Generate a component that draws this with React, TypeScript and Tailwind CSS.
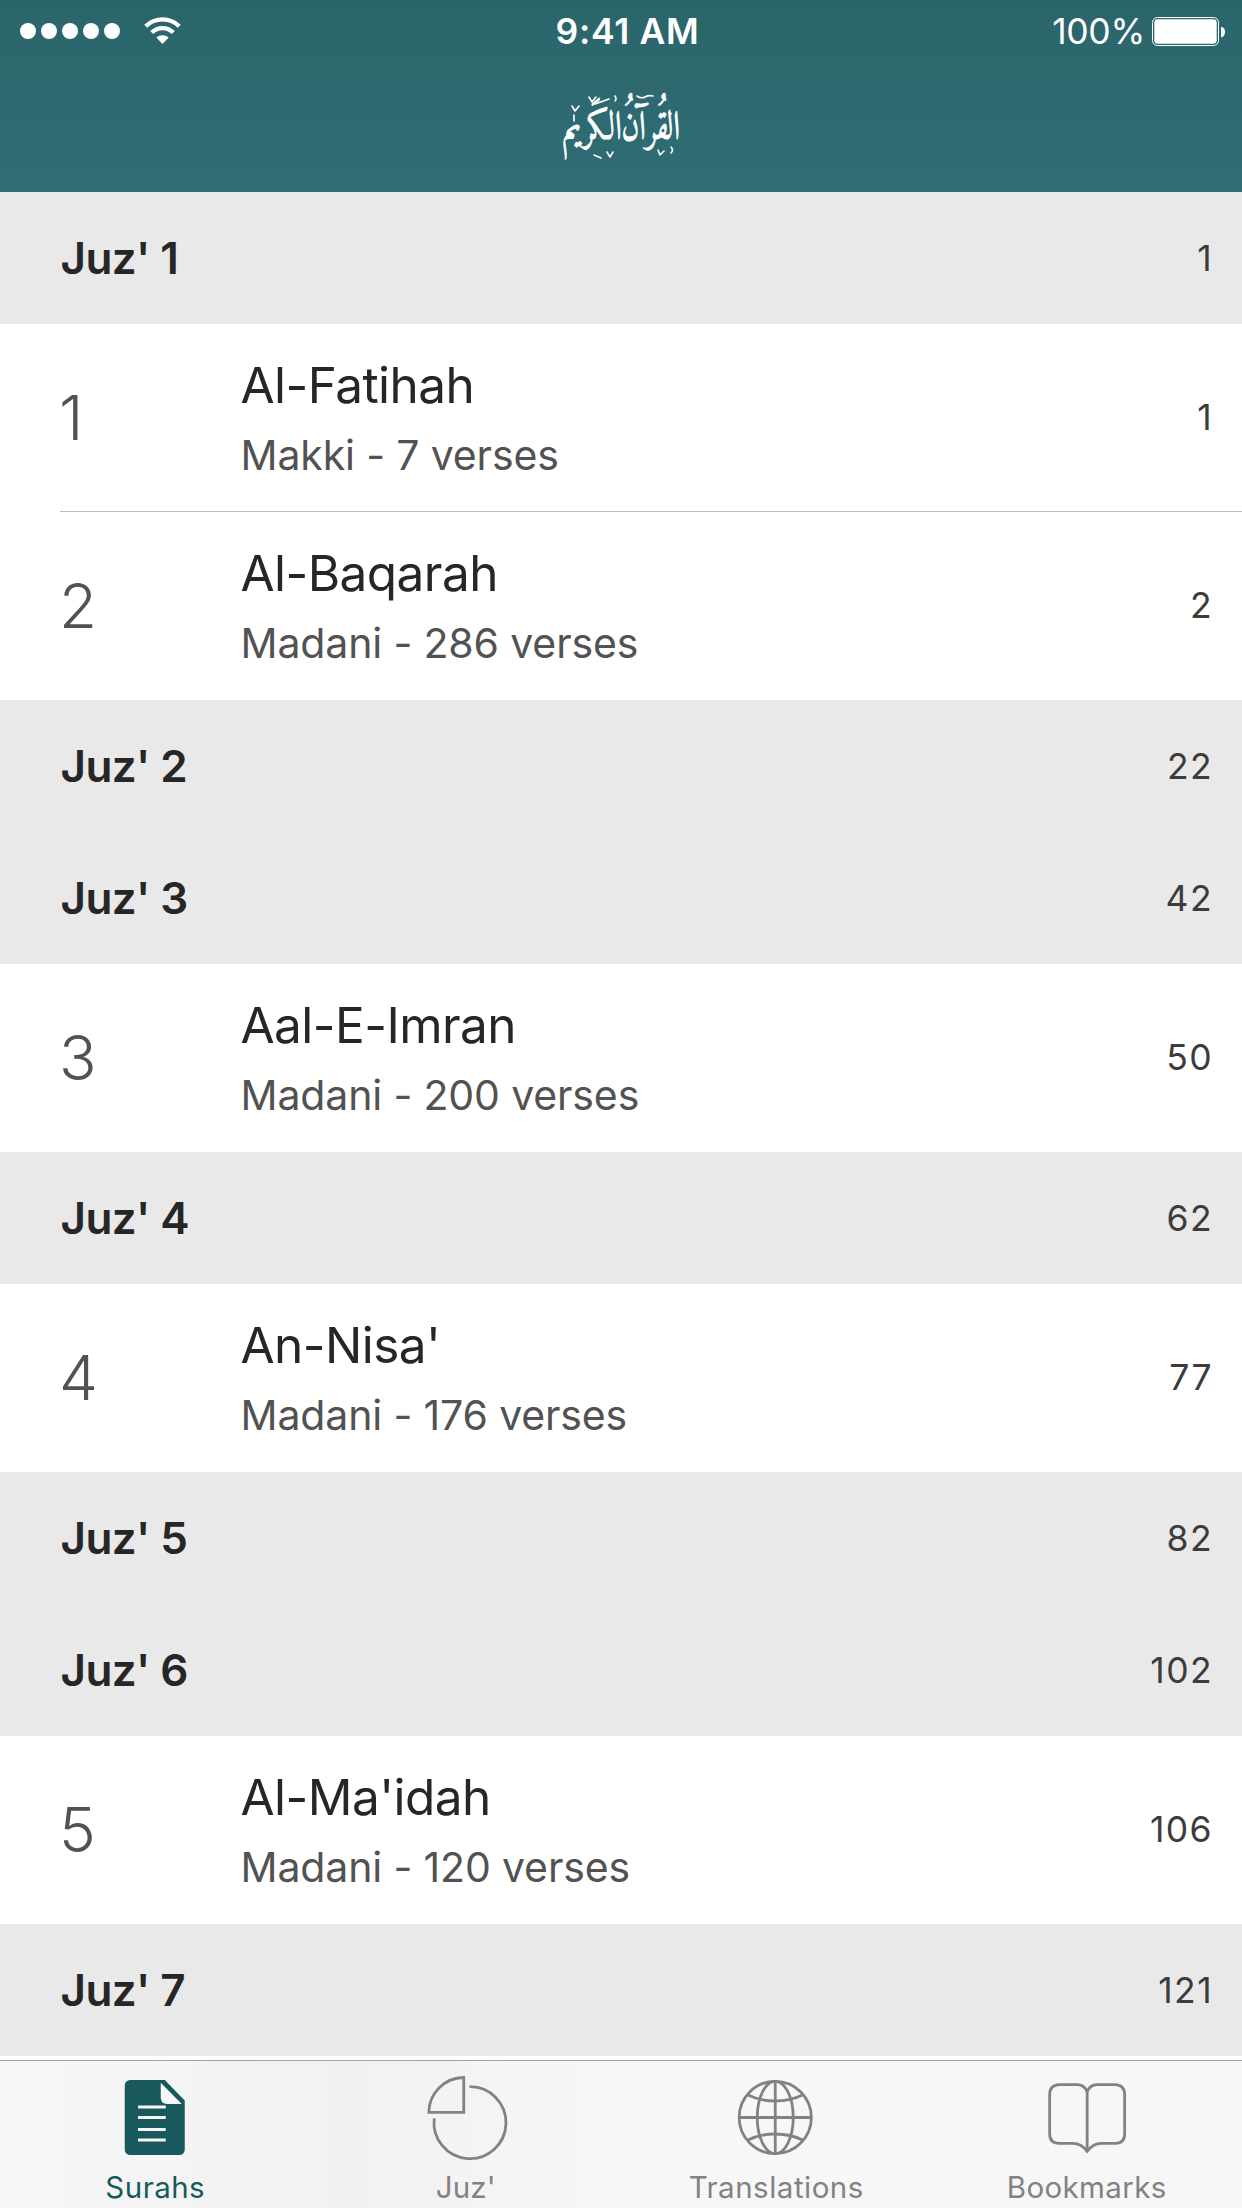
import type { ReactNode } from "react";

type Entry =
  | { kind: "juz"; label: string; page: number }
  | { kind: "surah"; number: number; title: string; detail: string; page: number; divider?: boolean };

const entries: Entry[] = [
  { kind: "juz", label: "Juz' 1", page: 1 },
  { kind: "surah", number: 1, title: "Al-Fatihah", detail: "Makki - 7 verses", page: 1, divider: true },
  { kind: "surah", number: 2, title: "Al-Baqarah", detail: "Madani - 286 verses", page: 2 },
  { kind: "juz", label: "Juz' 2", page: 22 },
  { kind: "juz", label: "Juz' 3", page: 42 },
  { kind: "surah", number: 3, title: "Aal-E-Imran", detail: "Madani - 200 verses", page: 50 },
  { kind: "juz", label: "Juz' 4", page: 62 },
  { kind: "surah", number: 4, title: "An-Nisa'", detail: "Madani - 176 verses", page: 77 },
  { kind: "juz", label: "Juz' 5", page: 82 },
  { kind: "juz", label: "Juz' 6", page: 102 },
  { kind: "surah", number: 5, title: "Al-Ma'idah", detail: "Madani - 120 verses", page: 106 },
  { kind: "juz", label: "Juz' 7", page: 121 },
];

function WifiIcon() {
  return (
    <svg width="37" height="27" viewBox="0 0 37 27" fill="none">
      <path d="M1.7 9.3A23.9 23.9 0 0 1 35.3 9.3" stroke="white" strokeWidth="4.3" />
      <path d="M7.7 15.6A15.2 15.2 0 0 1 29.3 15.6" stroke="white" strokeWidth="4.3" />
      <path d="M12.3 20.6A9.5 9.5 0 0 1 24.7 20.6L18.5 27Z" fill="white" />
    </svg>
  );
}

function BatteryIcon() {
  return (
    <svg width="73" height="29" viewBox="0 0 73 29" fill="none">
      <rect x="0.5" y="0.5" width="66" height="28" rx="5" stroke="white" />
      <rect x="2.3" y="2.3" width="62.4" height="24.4" rx="3.4" fill="white" />
      <path d="M69 9.7a4 5.3 0 0 1 0 10.6Z" fill="white" />
    </svg>
  );
}

function StatusBar() {
  return (
    <div className="flex h-[60px] items-center pt-[2px] text-[35.5px] leading-none text-white">
      <div className="flex flex-1 items-center pl-5">
        <div className="flex gap-[5px]">
          {[0, 1, 2, 3, 4].map((dot) => (
            <span key={dot} className="size-4 rounded-full bg-white" />
          ))}
        </div>
        <div className="pb-[2px] pl-6">
          <WifiIcon />
        </div>
      </div>
      <div className="pt-px pl-[10px] font-semibold tracking-[0.7px]">9:41 AM</div>
      <div className="flex flex-1 items-center justify-end gap-[7px] pr-[17px]">
        <span className="pt-px tracking-[-0.3px]">100%</span>
        <BatteryIcon />
      </div>
    </div>
  );
}

function Calligraphy() {
  return (
    <svg
      width="160"
      height="90"
      viewBox="0 0 160 90"
      fill="none"
      stroke="white"
      strokeLinecap="round"
      strokeLinejoin="round"
      className="overflow-visible font-[Amiri,'Noto_Naskh_Arabic','DejaVu_Sans',serif]"
    >
      <text
        transform="translate(140 59) scale(0.77 1)"
        fontSize="40"
        direction="rtl"
        fill="white"
        strokeWidth="0.9"
        className="[word-spacing:-12px]"
      >
        القُرآنُ الكَريم
      </text>
      <g strokeWidth="1.6">
        <path d="M49 17l3 5 4-5" />
        <path d="M32 26l3 5 4-5" />
        <path d="M67 72l3 5 3-5" />
        <path d="M118 70l2 5 4-4" />
        <path d="M34 35v6M131 67q3 3 0 6M75 16q2 3 0 5" />
        <path d="M54 75l7 3M55 24l14-5M97 16q4 3 8 1t8-1" />
      </g>
    </svg>
  );
}

function PageNumber({ page }: { page: number }) {
  return <span className="text-[35.5px] tracking-[1.4px] text-[#3c3c3c]">{page}</span>;
}

function JuzHeader({ label, page }: { label: string; page: number }) {
  return (
    <div className="flex h-[132px] shrink-0 items-center justify-between bg-[#e9e9e9] pr-[29px] pl-[60.5px]">
      <h2 className="text-[44px] font-semibold tracking-[-0.6px] text-[#262626]">{label}</h2>
      <div className="pt-[2px]">
        <PageNumber page={page} />
      </div>
    </div>
  );
}

function SurahRow({ number, title, detail, page, divider }: Extract<Entry, { kind: "surah" }>) {
  return (
    <div className="flex h-[188px] shrink-0 bg-white pl-[60px]">
      <div className={divider ? "flex flex-1 border-b border-[#bcbbc1] pr-[29px]" : "flex flex-1 pr-[29px] pb-px"}>
        <div className="flex w-[180.5px] items-center text-[62px] font-light text-[#525252]">
          <span className="-ml-px">{number}</span>
        </div>
        <div className="flex flex-1 flex-col gap-[15px] pt-[31px]">
          <div className="text-[49.5px] leading-[60px] tracking-[-0.55px] text-[#262626]">{title}</div>
          <div className="text-[41px] leading-[51px] tracking-[-0.14px] text-[#525252]">{detail}</div>
        </div>
        <div className="flex items-center pt-px">
          <PageNumber page={page} />
        </div>
      </div>
    </div>
  );
}

function TabIcon({ children }: { children: ReactNode }) {
  return (
    <svg
      width="84"
      height="84"
      viewBox="0 0 84 84"
      fill="none"
      stroke="currentColor"
      strokeWidth="2.8"
      className="overflow-visible"
    >
      {children}
    </svg>
  );
}

const tabs = [
  {
    label: "Surahs",
    active: true,
    tracking: "tracking-[0.45px]",
    icon: (
      <g transform="translate(11.75 6)" stroke="none">
        <path d="M5.5 0H40L60 20.5V69.5A5.5 5.5 0 0 1 54.5 75H5.5A5.5 5.5 0 0 1 0 69.5V5.5A5.5 5.5 0 0 1 5.5 0Z" fill="currentColor" />
        <path d="M36 2.7L57 24H42A6 6 0 0 1 36 18Z" fill="#f7f7f7" />
        <path d="M13.3 27H41M13.3 37.5H41M13.3 49.5H41M13.3 60H41" stroke="#f7f7f7" strokeWidth="3.1" />
      </g>
    ),
  },
  {
    label: "Juz'",
    active: false,
    tracking: "tracking-[0.2px]",
    icon: (
      <g transform="translate(3.25 2)">
        <path d="M1.6 36.3A35.2 35.2 0 0 1 36.5 1.5V36.3Z" />
        <path d="M42.3 10.7A36 36 0 1 1 7 42.3" />
      </g>
    ),
  },
  {
    label: "Translations",
    active: false,
    tracking: "tracking-[0.5px]",
    icon: (
      <g transform="translate(3.75 6)">
        <circle cx="37.5" cy="37.5" r="36.1" />
        <path d="M37.5 1.4V73.6M1.4 37.5H73.6" />
        <ellipse cx="37.5" cy="37.5" rx="18" ry="36.1" />
        <path d="M9.8 14.8Q22 21 37.5 21T65.2 14.8M9.8 60.2Q22 54 37.5 54T65.2 60.2" />
      </g>
    ),
  },
  {
    label: "Bookmarks",
    active: false,
    tracking: "tracking-[0.38px]",
    icon: (
      <g transform="translate(3.15 8.7)">
        <path d="M39 9.5C37.5 5 34 2 29 2H11Q1.5 2.5 1.5 12V51Q1.5 60.5 11 60.7H25C31 60.7 35 63.5 39 68.6C43 63.5 47 60.7 53 60.7H67Q76.5 60.5 76.5 51V12Q76.5 2.5 67 2H49C44 2 40.5 5 39 9.5V68" />
      </g>
    ),
  },
];

function TabBar() {
  return (
    <nav className="grid h-[148px] shrink-0 grid-cols-4 border-t border-[#a3a3a3] bg-linear-to-r from-[#f7f7f7] via-[#f1f1f1] via-28% to-[#f7f7f7] to-50%">
      {tabs.map((tab) => (
        <div
          key={tab.label}
          className={
            tab.active
              ? "flex flex-col items-center gap-[11px] pt-[13px] text-[#19595d]"
              : "flex flex-col items-center gap-[11px] pt-[13px] text-[#828282]"
          }
        >
          <TabIcon>{tab.icon}</TabIcon>
          <span className={`text-[29.5px] leading-9 ${tab.tracking}`}>{tab.label}</span>
        </div>
      ))}
    </nav>
  );
}

export default function App() {
  return (
    <div className="flex h-[2208px] w-[1242px] flex-col overflow-hidden bg-white font-[Inter,sans-serif]">
      <header className="flex h-[192px] shrink-0 flex-col bg-linear-to-b from-[#2a656a] to-[#306d75]">
        <StatusBar />
        <div className="flex justify-center pt-5 pr-[2px]">
          <Calligraphy />
        </div>
      </header>
      <main className="flex flex-1 flex-col">
        {entries.map((entry) =>
          entry.kind === "juz" ? (
            <JuzHeader key={entry.label} label={entry.label} page={entry.page} />
          ) : (
            <SurahRow key={entry.title} {...entry} />
          ),
        )}
      </main>
      <TabBar />
    </div>
  );
}
